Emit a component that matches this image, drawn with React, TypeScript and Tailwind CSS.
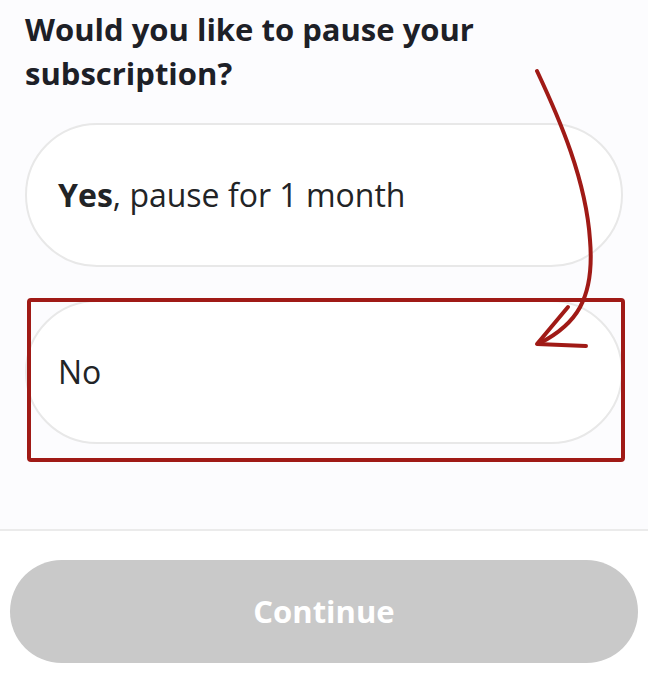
import React from "react";

export default function App() {
  return (
    <div className="relative w-[648px] h-[686px] overflow-hidden bg-white" style={{ fontFamily: '"Open Sans", "Noto Sans", sans-serif' }}>
      <div className="bg-[#fcfcfe] px-[25px] pb-[85px] border-b-2 border-[#ebebeb]">
        <h1 className="pt-[7px] text-[31px] leading-[44px] font-bold text-[#1d2027]">
          Would you like to pause your subscription?
        </h1>
        <div className="mt-[28px] flex flex-col gap-[33px]">
          <div className="h-[144px] rounded-full border-2 border-[#e8e8e8] bg-white flex items-center pl-[31px] text-[32px] text-[#222426]">
            <span><span className="font-bold">Yes</span>, pause for 1 month</span>
          </div>
          <div className="h-[144px] rounded-full border-2 border-[#e8e8e8] bg-white flex items-center pl-[31px] text-[32px] text-[#222426]">
            <span>No</span>
          </div>
        </div>
      </div>
      <div className="px-[10px] pt-[29px]">
        <button className="w-full h-[103px] rounded-full bg-[#c9c9c9] text-white text-[31px] font-bold">
          Continue
        </button>
      </div>
      <svg className="absolute left-0 top-0 pointer-events-none" width="648" height="686" viewBox="0 0 648 686" fill="none">
        <rect x="29" y="300" width="594" height="160" rx="2" stroke="#a01a16" strokeWidth="4" />
        <path d="M537 71 C560 120 586 180 590 240 C595 300 575 325 540 343" stroke="#a01a16" strokeWidth="4" strokeLinecap="round" />
        <path d="M568 307 L537 344 L586 346" stroke="#a01a16" strokeWidth="4" strokeLinecap="round" strokeLinejoin="round" />
      </svg>
    </div>
  );
}
